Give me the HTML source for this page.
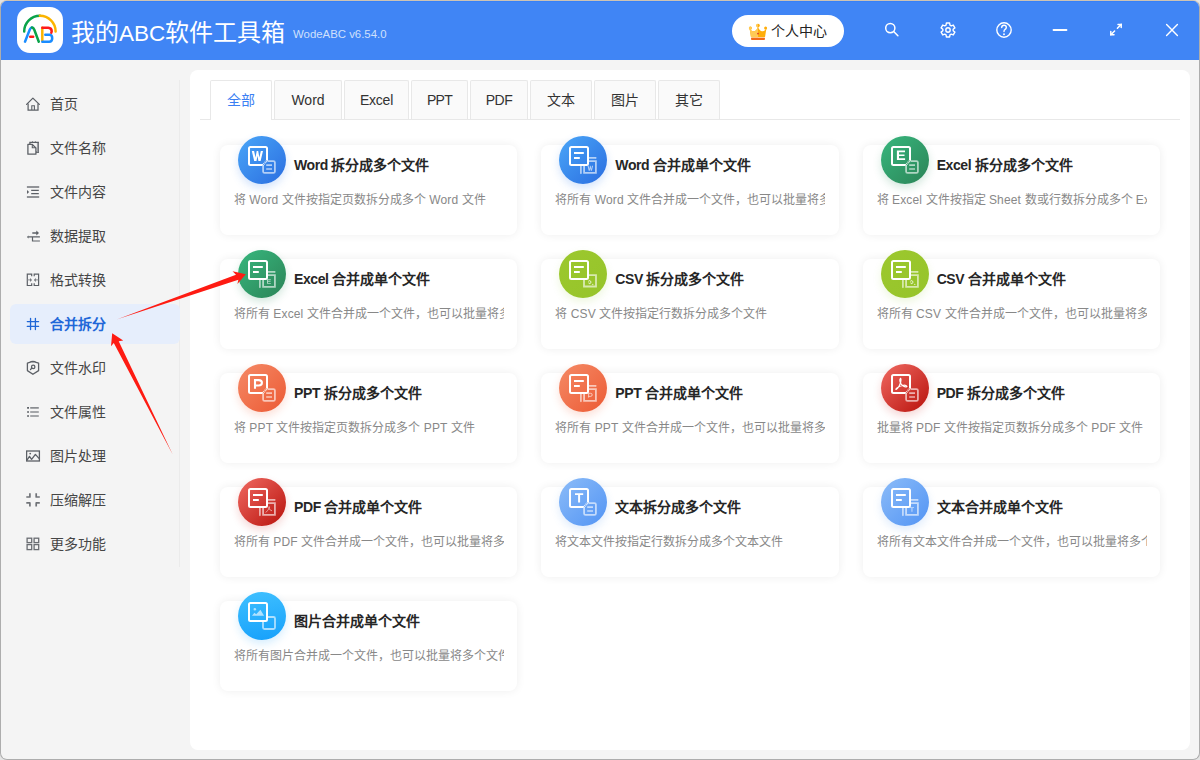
<!DOCTYPE html><html lang="zh-CN"><head><meta charset="utf-8"><style>
*{box-sizing:border-box;margin:0;padding:0}
html,body{width:1200px;height:760px;overflow:hidden;background:#e4e4e4;font-family:"Liberation Sans",sans-serif}
#win{position:absolute;left:0;top:0;width:1200px;height:760px;border:1px solid #adadad;border-top-color:#cdc3b4;border-radius:7px;overflow:hidden;background:#f4f4f4}
#hdr{position:absolute;left:0;top:0;width:1198px;height:59px;background:#4085f5;border-top:1px solid #3680f8}
#logo{position:absolute;left:16px;top:5px;width:46px;height:46px;background:#fff;border-radius:13px}
#title{position:absolute;left:70px;top:16px;color:#fff;font-size:24px;line-height:30px;white-space:nowrap}
#ver{position:absolute;left:292px;top:23.6px;color:#cfe0fc;font-size:11.4px;line-height:16px;white-space:nowrap}
#pc{position:absolute;left:731px;top:13px;width:112px;height:32px;background:#fff;border-radius:16px}
#pc span{position:absolute;left:39px;top:7px;font-size:14px;line-height:18px;color:#222;white-space:nowrap}
#side{position:absolute;left:0;top:59px;width:180px;height:700px}
.mi{position:absolute;left:9px;width:170px;height:40px;border-radius:6px}
.mi span{position:absolute;left:40px;top:11px;font-size:14px;line-height:18px;color:#454545;white-space:nowrap}
.mi svg{position:absolute;left:16px;top:12px}
.mi.act{background:#e6eefc}
.mi.act span{color:#2167d8;font-weight:bold}
#track{position:absolute;left:178px;top:20px;width:1px;height:487px;background:#ebebeb}
#panel{position:absolute;left:189px;top:69px;width:1000px;height:680px;background:#fff;border-radius:8px}
#tabline{position:absolute;left:10px;top:49px;width:980px;height:1px;background:#e8e8e8}
.tab{position:absolute;top:10px;height:39px;border:1px solid #e8e8e8;border-bottom:none;border-radius:2px 2px 0 0;background:#fafafa;font-size:14px;line-height:38px;text-align:center;color:#333}
.tab.act{background:#fff;color:#3b7ff3;height:40px}
.card{position:absolute;width:297.33px;height:90px;background:#fff;border-radius:8px;box-shadow:0 0 10px rgba(0,0,0,0.07)}
.card .ic{position:absolute;left:18px;top:-9px;width:48px;height:48px;border-radius:50%}
.card .ic svg{position:absolute;left:0;top:0}
.card .t{position:absolute;left:74px;top:11px;font-size:14px;line-height:18px;font-weight:bold;color:#262626;white-space:nowrap}
.card .d{position:absolute;left:14px;top:47px;width:270px;font-size:12px;line-height:16px;color:#888;white-space:nowrap;overflow:hidden}
.card i{font-style:normal;letter-spacing:-0.4px}
.card .d i{letter-spacing:0.15px}

</style></head><body><div id="win">
<div id="hdr">
<div id="logo"><svg width="46" height="46" viewBox="0 0 46 46" style="position:absolute;left:0;top:0">
<g fill="none" stroke-linecap="round" stroke-width="2.5">
<path d="M7.2 24.5 A15.7 15.7 0 0 1 22.9 8.8" stroke="#0aa34a"/>
<path d="M22.9 8.8 A15.7 15.7 0 0 1 38.6 24.5" stroke="#fbb400"/>
<path d="M8 34.7 L12.8 22.6 Q13.8 20.3 15.2 20.4" stroke="#1a8cff"/>
<path d="M14.9 20.4 Q16.5 20.5 17.3 22.7 L21.8 34.7" stroke="#0aa34a"/>
<path d="M13.2 29.8 L16.2 29.8" stroke="#ff1a1a"/>
<path d="M25.3 20.7 L25.3 33.5" stroke="#fbb400"/>
<path d="M25.3 20.7 L31.3 20.7 Q34.7 20.9 34.7 24.3 L34.3 25.8" stroke="#ff1a1a"/>
<path d="M28.3 27.7 L32.6 27.7 Q35.2 27.9 35.2 31.2 Q35.2 34.7 32.2 34.7 L25.3 34.7" stroke="#1a8cff"/>
</g></svg></div>
<div id="title">我的<span style="font-size:22.5px;letter-spacing:-0.05px">ABC</span>软件工具箱</div><div id="ver">WodeABC v6.54.0</div>
<div id="pc"><svg width="20" height="18" viewBox="0 0 20 18" style="position:absolute;left:16px;top:8px">
<defs><clipPath id="lh"><rect x="0" y="0" width="10" height="18"/></clipPath></defs>
<path d="M1.6 5.6 Q3.5 8.6 6.2 8.3 Q8.8 7.9 10 3.6 Q11.2 7.9 13.8 8.3 Q16.5 8.6 18.4 5.6 L17 14.3 H3 Z" fill="#ffad0a"/>
<circle cx="2.4" cy="5" r="1.5" fill="#ffad0a"/><circle cx="10" cy="2.6" r="1.8" fill="#ffad0a"/><circle cx="17.6" cy="5" r="1.5" fill="#ffad0a"/>
<g clip-path="url(#lh)"><path d="M1.6 5.6 Q3.5 8.6 6.2 8.3 Q8.8 7.9 10 3.6 Q11.2 7.9 13.8 8.3 Q16.5 8.6 18.4 5.6 L17 14.3 H3 Z" fill="#ffca55"/><circle cx="2.4" cy="5" r="1.5" fill="#ffca55"/><circle cx="10" cy="2.6" r="1.8" fill="#ffca55"/></g>
<rect x="3" y="14.7" width="14" height="2.2" rx="0.9" fill="#f26a1b"/>
<circle cx="10" cy="10.6" r="0.95" fill="#dd3a2a"/>
</svg><span>个人中心</span></div>
<svg width="1198" height="59" style="position:absolute;left:-1px;top:0" fill="none" stroke="#fff" stroke-width="1.5" stroke-linecap="round"><circle cx="890.3" cy="26.1" r="4.6"/><path d="M893.7 29.5 L897.9 33.7"/><path d="M946.38 20.98 L949.62 20.98 L949.95 23.18 L951.20 23.90 L953.27 23.09 L954.89 25.89 L953.15 27.28 L953.15 28.72 L954.89 30.11 L953.27 32.91 L951.20 32.10 L949.95 32.82 L949.62 35.02 L946.38 35.02 L946.05 32.82 L944.80 32.10 L942.73 32.91 L941.11 30.11 L942.85 28.72 L942.85 27.28 L941.11 25.89 L942.73 23.09 L944.80 23.90 L946.05 23.18Z" stroke-linejoin="round" stroke-width="1.4"/><circle cx="948" cy="28" r="2.2" stroke-width="1.4"/><circle cx="1004" cy="28" r="7.2" stroke-width="1.4"/><path d="M1001.7 25.6 Q1001.7 23.3 1004 23.3 Q1006.3 23.3 1006.3 25.4 Q1006.3 26.8 1004.9 27.5 Q1004 28 1004 29.6" stroke-width="1.4"/><circle cx="1004" cy="32.2" r="0.4" fill="#fff" stroke-width="1.1"/><path d="M1053.5 28 L1066.5 28" stroke-width="1.8"/><path d="M1110.8 32.8 L1114.6 29" /><path d="M1110.8 29.6 L1110.8 32.8 L1114 32.8"/><path d="M1121.2 22.4 L1117.4 26.2" /><path d="M1118 22.4 L1121.2 22.4 L1121.2 25.6"/><path d="M1166.6 22.6 L1177.4 33.4 M1177.4 22.6 L1166.6 33.4" stroke-width="1.4"/></svg>
</div>
<div id="side"><div id="track"></div>
<div class="mi" style="top:24px"><svg width="16" height="16" fill="none" stroke="#5c6066" stroke-width="1.25"><path d="M0.6 8.4 L6.9 2.1 L13.3 8.4" stroke-linecap="round" stroke-linejoin="round"/><path d="M2.1 7.4 V14 H12 V7.4"/><path d="M5.8 14 V9.7 H8.4 V14" stroke-width="1.1"/></svg><span>首页</span></div>
<div class="mi" style="top:68px"><svg width="16" height="16" fill="none" stroke="#5c6066" stroke-width="1.3"><path d="M3.9 4 V2.3 H12.3 V12.3 H10"/><path d="M6.5 1.4 V2.6 M9.4 1.4 V2.6" stroke-width="1"/><path d="M11.6 3 V11.6 H10" stroke-width="1.4" stroke="#9a9ca0"/><path d="M1.9 4.4 H6.3 L9.9 8 V14.2 H1.9 Z" fill="#f4f4f4" stroke-linejoin="round"/><path d="M6.3 4.6 V7.7 H9.6" stroke-width="1.1"/></svg><span>文件名称</span></div>
<div class="mi" style="top:112px"><svg width="16" height="16" fill="none" stroke="#5c6066" stroke-width="1.3"><path d="M0.9 3 H13.2 M0.9 13 H13.2" stroke-width="1.5" stroke="#707378"/><path d="M5.2 6.4 H12.8 M5.2 9.6 H12.8" stroke-width="1.2"/><path d="M1 5.9 L3.1 7.9 L1 9.9Z" fill="#5c6066" stroke="none"/></svg><span>文件内容</span></div>
<div class="mi" style="top:156px"><svg width="16" height="16" fill="none" stroke="#5c6066" stroke-width="1.3"><path d="M6.3 5 H11" stroke-width="1.3"/><path d="M10.3 2.6 L13 5 L10.3 7.4Z" fill="#5c6066" stroke="none"/><path d="M2.4 8.9 H13.9 M6.5 8.9 V13 H13.9" stroke-width="1.2"/><path d="M2.6 7.4 L0.9 8.9 L2.6 10.4Z" fill="#5c6066" stroke="none"/></svg><span>数据提取</span></div>
<div class="mi" style="top:200px"><svg width="16" height="16" fill="none" stroke="#5c6066" stroke-width="1.3"><path d="M5.7 4.3 V2.2 H1.3 V13.5 H5.7 V11.2 M8.2 4.3 V2.2 H12.6 V13.5 H8.2 V11.2" stroke-width="1.2"/><path d="M1.5 7.9 H4.5 M12.4 7.9 H9.4" stroke-width="1" stroke="#8a8d91"/><path d="M4.2 5.9 L5.9 7.9 L4.2 9.9Z M9.7 5.9 L8 7.9 L9.7 9.9Z" fill="#5c6066" stroke="none"/></svg><span>格式转换</span></div>
<div class="mi act" style="top:244px"><svg width="16" height="16" fill="none" stroke="#1f66d6" stroke-width="1.3"><path d="M4.55 2.3 V13.5 M9.4 2.3 V13.5 M1.3 5.6 H12.6 M1.3 10.4 H12.6" stroke-linecap="round"/></svg><span>合并拆分</span></div>
<div class="mi" style="top:288px"><svg width="16" height="16" fill="none" stroke="#5c6066" stroke-width="1.3"><path d="M6.9 1.5 Q5 1.6 3.6 2.4 L1.4 3.1 V10.6 L6.9 14.3 L12.6 10.6 V3.1 L10.2 2.4 Q8.8 1.6 6.9 1.5Z" stroke-linejoin="round"/><circle cx="7.2" cy="6.9" r="1.7"/><path d="M6 8.1 L4.5 9.5" stroke-linecap="round"/></svg><span>文件水印</span></div>
<div class="mi" style="top:332px"><svg width="16" height="16" fill="none" stroke="#5c6066" stroke-width="1.3"><path d="M1.1 3.9 H3 M1.1 8 H3 M1.1 12 H3" stroke-width="1.7"/><path d="M4.2 3.9 H12.8 M4.2 8 H12.8 M4.2 12 H12.8" stroke-width="1.6" stroke="#8a8d91"/></svg><span>文件属性</span></div>
<div class="mi" style="top:376px"><svg width="16" height="16" fill="none" stroke="#5c6066" stroke-width="1.3"><rect x="0.6" y="3" width="12.8" height="10" stroke-width="1.3"/><path d="M0.8 12.3 L3.5 8.4 L5.6 11.3 L9.4 6.4 L13.2 10.6" stroke-linejoin="round"/><circle cx="4.2" cy="5.6" r="0.9" fill="#5c6066" stroke="none"/></svg><span>图片处理</span></div>
<div class="mi" style="top:420px"><svg width="16" height="16" fill="none" stroke="#5c6066" stroke-width="1.3"><path d="M3.9 1.2 V5 H0.3 M10.2 1.2 V5 H13.8 M0.3 10.9 H3.9 V14.6 M13.8 10.9 H10.2 V14.6" stroke-width="1.7" stroke="#707378" stroke-linejoin="round"/></svg><span>压缩解压</span></div>
<div class="mi" style="top:464px"><svg width="16" height="16" fill="none" stroke="#6a6d72" stroke-width="1.3"><rect x="1.1" y="2.2" width="4.6" height="4.4"/><rect x="8.1" y="2.2" width="4.6" height="4.4"/><rect x="1.1" y="8.6" width="4.6" height="5"/><rect x="8.1" y="8.6" width="4.6" height="5"/></svg><span>更多功能</span></div>
</div>
<div id="panel"><div id="tabline"></div>
<div class="tab act" style="left:20px;width:62px;letter-spacing:0">全部</div>
<div class="tab" style="left:84px;width:68px;letter-spacing:0">Word</div>
<div class="tab" style="left:154px;width:65px;letter-spacing:-0.2px">Excel</div>
<div class="tab" style="left:221px;width:57px;letter-spacing:-0.7px">PPT</div>
<div class="tab" style="left:280px;width:58px;letter-spacing:-0.5px">PDF</div>
<div class="tab" style="left:340px;width:62px;letter-spacing:0">文本</div>
<div class="tab" style="left:404px;width:62px;letter-spacing:0">图片</div>
<div class="tab" style="left:468px;width:62px;letter-spacing:0">其它</div>
<div class="card" style="left:30.00px;top:75px"><div class="ic" style="background:linear-gradient(135deg,#4aa6f8,#2a6de0);box-shadow:0 4px 8px rgba(60,130,240,0.22)"><svg width="48" height="48" viewBox="0 0 48 48"><path d="M29 24.6 V12.5 Q29 11 27.5 11 H12.5 Q11 11 11 12.5 V27.5 Q11 29 12.5 29 H24.6" fill="none" stroke="#fff" stroke-width="2"/><path d="M13.8 14.9 H16.1 L17.5 21.6 L18.7 14.9 H20.2 L21.4 21.6 L22.8 14.9 H25 L22.6 25 H20.4 L19.45 19.8 L18.5 25 H16.2 Z" fill="#fff"/><path d="M29.6 25.1 H35.4 Q36.9 25.1 36.9 26.6 V35.4 Q36.9 36.9 35.4 36.9 H26.6 Q25.1 36.9 25.1 35.4 V29.6" fill="none" stroke="rgba(255,255,255,0.62)" stroke-width="1.8"/><path d="M28.2 29.2 H34 M28.2 33 H34" stroke="rgba(255,255,255,0.62)" stroke-width="1.7"/><path d="M24.6 29.1 L29.4 24.3" stroke="#fff" stroke-width="2.2" stroke-dasharray="0.75 0.85"/></svg></div><div class="t"><i>Word </i>拆分成多个文件</div><div class="d">将 <i>Word </i>文件按指定页数拆分成多个 <i>Word </i>文件</div></div>
<div class="card" style="left:351.33px;top:75px"><div class="ic" style="background:linear-gradient(135deg,#4aa6f8,#2a6de0);box-shadow:0 4px 8px rgba(60,130,240,0.22)"><svg width="48" height="48" viewBox="0 0 48 48"><path d="M30 21.9 H36.6 L37.2 22.5" fill="none" stroke="rgba(255,255,255,0.62)" stroke-width="1.7"/><path d="M21.9 30 V37.1 L22.5 37.6" fill="none" stroke="rgba(255,255,255,0.62)" stroke-width="1.7"/><path d="M30 25.1 H36.9 V36.8 H25.1 V30" fill="none" stroke="rgba(255,255,255,0.62)" stroke-width="1.8"/><path d="M 28.50 29.70 H 29.65 L 30.35 33.05 L 30.95 29.70 H 31.70 L 32.30 33.05 L 33.00 29.70 H 34.10 L 32.90 34.75 H 31.80 L 31.32 32.15 L 30.85 34.75 H 29.70 Z" fill="rgba(255,255,255,0.62)"/><rect x="11" y="11" width="18" height="18" rx="1.5" fill="none" stroke="#fff" stroke-width="2"/><path d="M15 17 H24.8 M15 22 H20.8" stroke="#fff" stroke-width="1.8"/></svg></div><div class="t"><i>Word </i>合并成单个文件</div><div class="d">将所有 <i>Word </i>文件合并成一个文件，也可以批量将多个文件</div></div>
<div class="card" style="left:672.66px;top:75px"><div class="ic" style="background:linear-gradient(135deg,#38b77e,#2b8457);box-shadow:0 4px 8px rgba(40,140,90,0.2)"><svg width="48" height="48" viewBox="0 0 48 48"><path d="M29 24.6 V12.5 Q29 11 27.5 11 H12.5 Q11 11 11 12.5 V27.5 Q11 29 12.5 29 H24.6" fill="none" stroke="#fff" stroke-width="2"/><path d="M15.9 14.5 H24 V16.3 H18 V18.4 H23.5 V20.1 H18 V22.2 H24.1 V24 H15.9 Z" fill="#fff"/><path d="M29.6 25.1 H35.4 Q36.9 25.1 36.9 26.6 V35.4 Q36.9 36.9 35.4 36.9 H26.6 Q25.1 36.9 25.1 35.4 V29.6" fill="none" stroke="rgba(255,255,255,0.62)" stroke-width="1.8"/><path d="M28.2 29.2 H34 M28.2 33 H34" stroke="rgba(255,255,255,0.62)" stroke-width="1.7"/><path d="M24.6 29.1 L29.4 24.3" stroke="#fff" stroke-width="2.2" stroke-dasharray="0.75 0.85"/></svg></div><div class="t"><i>Excel </i>拆分成多个文件</div><div class="d">将 <i>Excel </i>文件按指定 <i>Sheet </i>数或行数拆分成多个 <i>Excel </i>文件</div></div>
<div class="card" style="left:30.00px;top:189px"><div class="ic" style="background:linear-gradient(135deg,#38b77e,#2b8457);box-shadow:0 4px 8px rgba(40,140,90,0.2)"><svg width="48" height="48" viewBox="0 0 48 48"><path d="M30 21.9 H36.6 L37.2 22.5" fill="none" stroke="rgba(255,255,255,0.62)" stroke-width="1.7"/><path d="M21.9 30 V37.1 L22.5 37.6" fill="none" stroke="rgba(255,255,255,0.62)" stroke-width="1.7"/><path d="M30 25.1 H36.9 V36.8 H25.1 V30" fill="none" stroke="rgba(255,255,255,0.62)" stroke-width="1.8"/><path d="M 29.00 29.30 H 32.81 V 30.15 H 29.99 V 31.13 H 32.57 V 31.93 H 29.99 V 32.92 H 32.85 V 33.77 H 29.00 Z" fill="rgba(255,255,255,0.62)"/><rect x="11" y="11" width="18" height="18" rx="1.5" fill="none" stroke="#fff" stroke-width="2"/><path d="M15 17 H24.8 M15 22 H20.8" stroke="#fff" stroke-width="1.8"/></svg></div><div class="t"><i>Excel </i>合并成单个文件</div><div class="d">将所有 <i>Excel </i>文件合并成一个文件，也可以批量将多个文件</div></div>
<div class="card" style="left:351.33px;top:189px"><div class="ic" style="background:linear-gradient(135deg,#9cc82e,#96c42a);box-shadow:0 4px 8px rgba(140,200,40,0.15)"><svg width="48" height="48" viewBox="0 0 48 48"><path d="M30 25.1 H37 V36.5 H25 V30" fill="none" stroke="rgba(255,255,255,0.62)" stroke-width="1.8"/><path d="M29.3 31.3 Q30.3 30.3 31.3 30.9 Q32 31.5 31.8 32.6 Q31.6 33.6 30.5 33.6 Q29.6 33.5 29.8 32.6" fill="none" stroke="rgba(255,255,255,0.85)" stroke-width="1"/><circle cx="33.8" cy="34.4" r="0.55" fill="rgba(255,255,255,0.85)"/><rect x="11" y="11" width="18" height="18" rx="1.5" fill="none" stroke="#fff" stroke-width="2"/><path d="M15 17 H24.8 M15 22 H20.8" stroke="#fff" stroke-width="1.8"/></svg></div><div class="t"><i>CSV </i>拆分成多个文件</div><div class="d">将 <i>CSV </i>文件按指定行数拆分成多个文件</div></div>
<div class="card" style="left:672.66px;top:189px"><div class="ic" style="background:linear-gradient(135deg,#9cc82e,#96c42a);box-shadow:0 4px 8px rgba(140,200,40,0.15)"><svg width="48" height="48" viewBox="0 0 48 48"><path d="M30 21.9 H36.6 L37.2 22.5" fill="none" stroke="rgba(255,255,255,0.62)" stroke-width="1.7"/><path d="M21.9 30 V37.1 L22.5 37.6" fill="none" stroke="rgba(255,255,255,0.62)" stroke-width="1.7"/><path d="M30 25.1 H36.9 V36.8 H25.1 V30" fill="none" stroke="rgba(255,255,255,0.62)" stroke-width="1.8"/><path d="M29.3 31.3 Q30.3 30.3 31.3 30.9 Q32 31.5 31.8 32.6 Q31.6 33.6 30.5 33.6 Q29.6 33.5 29.8 32.6" fill="none" stroke="rgba(255,255,255,0.85)" stroke-width="1"/><circle cx="33.8" cy="34.4" r="0.55" fill="rgba(255,255,255,0.85)"/><rect x="11" y="11" width="18" height="18" rx="1.5" fill="none" stroke="#fff" stroke-width="2"/><path d="M15 17 H24.8 M15 22 H20.8" stroke="#fff" stroke-width="1.8"/></svg></div><div class="t"><i>CSV </i>合并成单个文件</div><div class="d">将所有 <i>CSV </i>文件合并成一个文件，也可以批量将多个文件</div></div>
<div class="card" style="left:30.00px;top:303px"><div class="ic" style="background:linear-gradient(135deg,#f58a66,#ec5a34);box-shadow:0 4px 8px rgba(240,100,60,0.2)"><svg width="48" height="48" viewBox="0 0 48 48"><path d="M29 24.6 V12.5 Q29 11 27.5 11 H12.5 Q11 11 11 12.5 V27.5 Q11 29 12.5 29 H24.6" fill="none" stroke="#fff" stroke-width="2"/><path d="M17 24.8 V16.1 H20.7 Q23.9 16.1 23.9 18.8 Q23.9 21.5 20.7 21.5 H17" fill="none" stroke="#fff" stroke-width="2.1"/><path d="M29.6 25.1 H35.4 Q36.9 25.1 36.9 26.6 V35.4 Q36.9 36.9 35.4 36.9 H26.6 Q25.1 36.9 25.1 35.4 V29.6" fill="none" stroke="rgba(255,255,255,0.62)" stroke-width="1.8"/><path d="M28.2 29.2 H34 M28.2 33 H34" stroke="rgba(255,255,255,0.62)" stroke-width="1.7"/><path d="M24.6 29.1 L29.4 24.3" stroke="#fff" stroke-width="2.2" stroke-dasharray="0.75 0.85"/></svg></div><div class="t"><i>PPT </i>拆分成多个文件</div><div class="d">将 <i>PPT </i>文件按指定页数拆分成多个 <i>PPT </i>文件</div></div>
<div class="card" style="left:351.33px;top:303px"><div class="ic" style="background:linear-gradient(135deg,#f58a66,#ec5a34);box-shadow:0 4px 8px rgba(240,100,60,0.2)"><svg width="48" height="48" viewBox="0 0 48 48"><path d="M30 21.9 H36.6 L37.2 22.5" fill="none" stroke="rgba(255,255,255,0.62)" stroke-width="1.7"/><path d="M21.9 30 V37.1 L22.5 37.6" fill="none" stroke="rgba(255,255,255,0.62)" stroke-width="1.7"/><path d="M30 25.1 H36.9 V36.8 H25.1 V30" fill="none" stroke="rgba(255,255,255,0.62)" stroke-width="1.8"/><path d="M29.6 33.6 V29.3 H31.6 Q33.2 29.3 33.2 30.9 Q33.2 32.4 31.6 32.4 H29.6" fill="none" stroke="rgba(255,255,255,0.6)" stroke-width="1"/><rect x="11" y="11" width="18" height="18" rx="1.5" fill="none" stroke="#fff" stroke-width="2"/><path d="M15 17 H24.8 M15 22 H20.8" stroke="#fff" stroke-width="1.8"/></svg></div><div class="t"><i>PPT </i>合并成单个文件</div><div class="d">将所有 <i>PPT </i>文件合并成一个文件，也可以批量将多个文件</div></div>
<div class="card" style="left:672.66px;top:303px"><div class="ic" style="background:linear-gradient(135deg,#f06a62,#b8120c);box-shadow:0 4px 8px rgba(200,30,20,0.18)"><svg width="48" height="48" viewBox="0 0 48 48"><path d="M29 24.6 V12.5 Q29 11 27.5 11 H12.5 Q11 11 11 12.5 V27.5 Q11 29 12.5 29 H24.6" fill="none" stroke="#fff" stroke-width="2"/><path d="M19.4 14.4 Q18.3 15.5 19.1 18.1 Q20.2 21.1 22.6 22.3 Q24.6 23.3 26 22.4 Q25.2 20.9 22.5 21.2 Q18.5 21.7 16 23.9 Q14.3 25.5 15.2 25.5 Q16.4 25.3 18.4 21.6 Q20.1 18.3 20 15.7 Q19.9 14.2 19.4 14.4 Z" fill="none" stroke="#fff" stroke-width="1.15" stroke-linejoin="round"/><path d="M29.6 25.1 H35.4 Q36.9 25.1 36.9 26.6 V35.4 Q36.9 36.9 35.4 36.9 H26.6 Q25.1 36.9 25.1 35.4 V29.6" fill="none" stroke="rgba(255,255,255,0.62)" stroke-width="1.8"/><path d="M28.2 29.2 H34 M28.2 33 H34" stroke="rgba(255,255,255,0.62)" stroke-width="1.7"/><path d="M24.6 29.1 L29.4 24.3" stroke="#fff" stroke-width="2.2" stroke-dasharray="0.75 0.85"/></svg></div><div class="t"><i>PDF </i>拆分成多个文件</div><div class="d">批量将 <i>PDF </i>文件按指定页数拆分成多个 <i>PDF </i>文件</div></div>
<div class="card" style="left:30.00px;top:417px"><div class="ic" style="background:linear-gradient(135deg,#f06a62,#b8120c);box-shadow:0 4px 8px rgba(200,30,20,0.18)"><svg width="48" height="48" viewBox="0 0 48 48"><path d="M30 21.9 H36.6 L37.2 22.5" fill="none" stroke="rgba(255,255,255,0.62)" stroke-width="1.7"/><path d="M21.9 30 V37.1 L22.5 37.6" fill="none" stroke="rgba(255,255,255,0.62)" stroke-width="1.7"/><path d="M30 25.1 H36.9 V36.8 H25.1 V30" fill="none" stroke="rgba(255,255,255,0.62)" stroke-width="1.8"/><path d="M27.8 34.5 Q30 32.3 31 30.5 Q31.6 29.2 31.2 28.6 Q30.7 29 31.1 30.6 Q31.8 32.3 34 32.8" fill="none" stroke="rgba(255,255,255,0.6)" stroke-width="0.9"/><rect x="11" y="11" width="18" height="18" rx="1.5" fill="none" stroke="#fff" stroke-width="2"/><path d="M15 17 H24.8 M15 22 H20.8" stroke="#fff" stroke-width="1.8"/></svg></div><div class="t"><i>PDF </i>合并成单个文件</div><div class="d">将所有 <i>PDF </i>文件合并成一个文件，也可以批量将多个文件</div></div>
<div class="card" style="left:351.33px;top:417px"><div class="ic" style="background:linear-gradient(135deg,#8cbcf8,#5294f4);box-shadow:0 4px 8px rgba(80,150,240,0.18)"><svg width="48" height="48" viewBox="0 0 48 48"><path d="M29 24.6 V12.5 Q29 11 27.5 11 H12.5 Q11 11 11 12.5 V27.5 Q11 29 12.5 29 H24.6" fill="none" stroke="#fff" stroke-width="2"/><path d="M16 15.3 H24.2 V17.1 H21.1 V24.6 H19.1 V17.1 H16 Z" fill="#fff"/><path d="M29.6 25.1 H35.4 Q36.9 25.1 36.9 26.6 V35.4 Q36.9 36.9 35.4 36.9 H26.6 Q25.1 36.9 25.1 35.4 V29.6" fill="none" stroke="rgba(255,255,255,0.62)" stroke-width="1.8"/><path d="M28.2 29.2 H34 M28.2 33 H34" stroke="rgba(255,255,255,0.62)" stroke-width="1.7"/><path d="M24.6 29.1 L29.4 24.3" stroke="#fff" stroke-width="2.2" stroke-dasharray="0.75 0.85"/></svg></div><div class="t">文本拆分成多个文件</div><div class="d">将文本文件按指定行数拆分成多个文本文件</div></div>
<div class="card" style="left:672.66px;top:417px"><div class="ic" style="background:linear-gradient(135deg,#8cbcf8,#5294f4);box-shadow:0 4px 8px rgba(80,150,240,0.18)"><svg width="48" height="48" viewBox="0 0 48 48"><path d="M30 21.9 H36.6 L37.2 22.5" fill="none" stroke="rgba(255,255,255,0.62)" stroke-width="1.7"/><path d="M21.9 30 V37.1 L22.5 37.6" fill="none" stroke="rgba(255,255,255,0.62)" stroke-width="1.7"/><path d="M30 25.1 H36.9 V36.8 H25.1 V30" fill="none" stroke="rgba(255,255,255,0.62)" stroke-width="1.8"/><path d="M 28.90 29.20 H 33.00 V 30.10 H 31.45 V 33.85 H 30.45 V 30.10 H 28.90 Z" fill="rgba(255,255,255,0.62)"/><rect x="11" y="11" width="18" height="18" rx="1.5" fill="none" stroke="#fff" stroke-width="2"/><path d="M15 17 H24.8 M15 22 H20.8" stroke="#fff" stroke-width="1.8"/></svg></div><div class="t">文本合并成单个文件</div><div class="d">将所有文本文件合并成一个文件，也可以批量将多个文件</div></div>
<div class="card" style="left:30.00px;top:531px"><div class="ic" style="background:linear-gradient(170deg,#3fc0ff,#16a0fb);box-shadow:0 4px 8px rgba(30,160,250,0.18)"><svg width="48" height="48" viewBox="0 0 48 48"><path d="M30 25 H35.5 Q37 25 37 26.5 V35.5 Q37 37 35.5 37 H26.5 Q25 37 25 35.5 V30" fill="none" stroke="rgba(255,255,255,0.62)" stroke-width="1.8"/><rect x="11" y="11" width="18" height="18" rx="1.5" fill="none" stroke="#fff" stroke-width="2"/><circle cx="16.8" cy="17.3" r="1.3" fill="rgba(255,255,255,0.62)"/><path d="M14 23.8 L16.4 20.8 L18.2 22.2 L22.4 17.7 L26.1 23.8 Z" fill="rgba(255,255,255,0.62)"/></svg></div><div class="t">图片合并成单个文件</div><div class="d">将所有图片合并成一个文件，也可以批量将多个文件</div></div>
</div>
<svg width="1200" height="760" style="position:absolute;left:-1px;top:-1px;pointer-events:none">
<path d="M117.3 319.3 L236 274.7 L232.6 271.3 L245.8 274.2 L237.4 283.9 L238.4 279.7 Z" fill="#fe1b12"/>
<path d="M172.7 454.4 L113.8 342.9 L111 346.3 L112.2 333.2 L123.2 340.5 L118.7 341.3 Z" fill="#fe1b12"/>
</svg>
</div></body></html>
